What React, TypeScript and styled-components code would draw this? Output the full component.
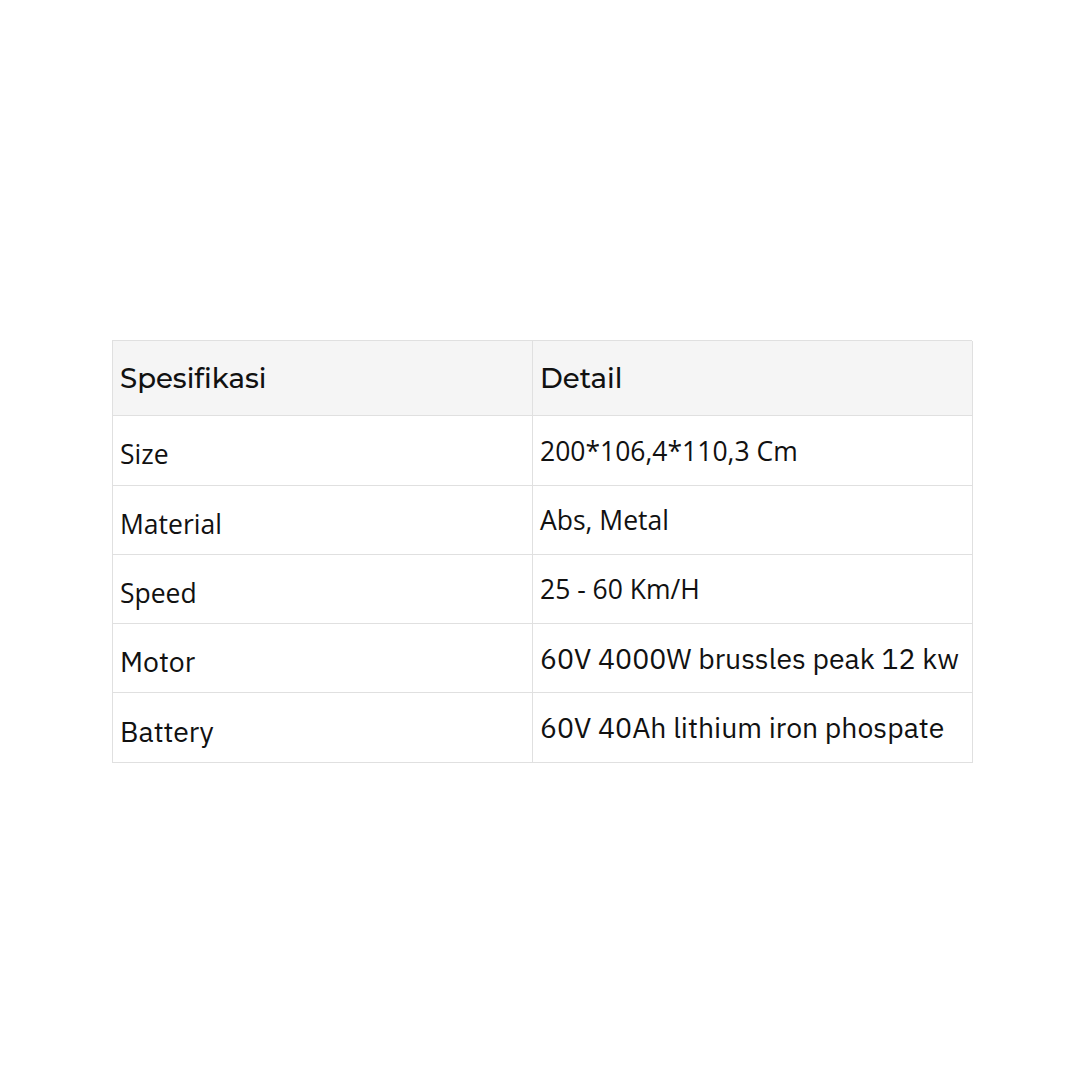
import React from "react";
import styled, { createGlobalStyle } from "styled-components";

const Global = createGlobalStyle`
  html, body { margin: 0; padding: 0; background: #ffffff; }
  body { width: 1080px; height: 1080px; }
`;

const Page = styled.div`
  width: 1080px;
  height: 1080px;
  box-sizing: border-box;
  padding: 340px 0 0 112px;
`;

const Table = styled.div`
  display: grid;
  grid-template-columns: 420px 440px;
  grid-template-rows: 75px 70px 69px 69px 69px 70px;
  width: 860px;
  border-top: 1px solid #e0e0e0;
  border-left: 1px solid #e0e0e0;
  box-sizing: border-box;
`;

type CellProps = { $head?: boolean; $font?: "open" | "plex"; $shift?: number };

const Cell = styled.div<CellProps>`
  display: flex;
  align-items: center;
  box-sizing: border-box;
  padding: ${(p) => (p.$shift ?? 0) + "px"} 7px 0 7px;
  border-right: 1px solid #e0e0e0;
  border-bottom: 1px solid #e0e0e0;
  background: ${(p) => (p.$head ? "#f5f5f5" : "#ffffff")};
  color: #111111;
  font-family: ${(p) =>
    p.$head
      ? '"Montserrat", "Lato", "Open Sans", sans-serif'
      : p.$font === "plex"
      ? '"IBM Plex Sans", "Noto Sans", sans-serif'
      : '"Open Sans", "Noto Sans", sans-serif'};
  font-weight: ${(p) => (p.$head ? 500 : 400)};
  font-size: ${(p) => (p.$head ? "27.6px" : p.$font === "plex" ? "28.4px" : "26.5px")};
  white-space: nowrap;
`;

const rows: { k: string; v: string; font: "open" | "plex" }[] = [
  { k: "Size", v: "200*106,4*110,3 Cm", font: "open" },
  { k: "Material", v: "Abs, Metal", font: "open" },
  { k: "Speed", v: "25 - 60 Km/H", font: "open" },
  { k: "Motor", v: "60V 4000W brussles peak 12 kw", font: "plex" },
  { k: "Battery", v: "60V 40Ah lithium iron phospate", font: "plex" },
];

export default function App() {
  return (
    <>
      <Global />
      <Page>
        <Table>
          <Cell $head>Spesifikasi</Cell>
          <Cell $head>Detail</Cell>
          {rows.map((r) => (
            <React.Fragment key={r.k}>
              <Cell $font={r.font} $shift={7}>{r.k}</Cell>
              <Cell $font={r.font}>{r.v}</Cell>
            </React.Fragment>
          ))}
        </Table>
      </Page>
    </>
  );
}
